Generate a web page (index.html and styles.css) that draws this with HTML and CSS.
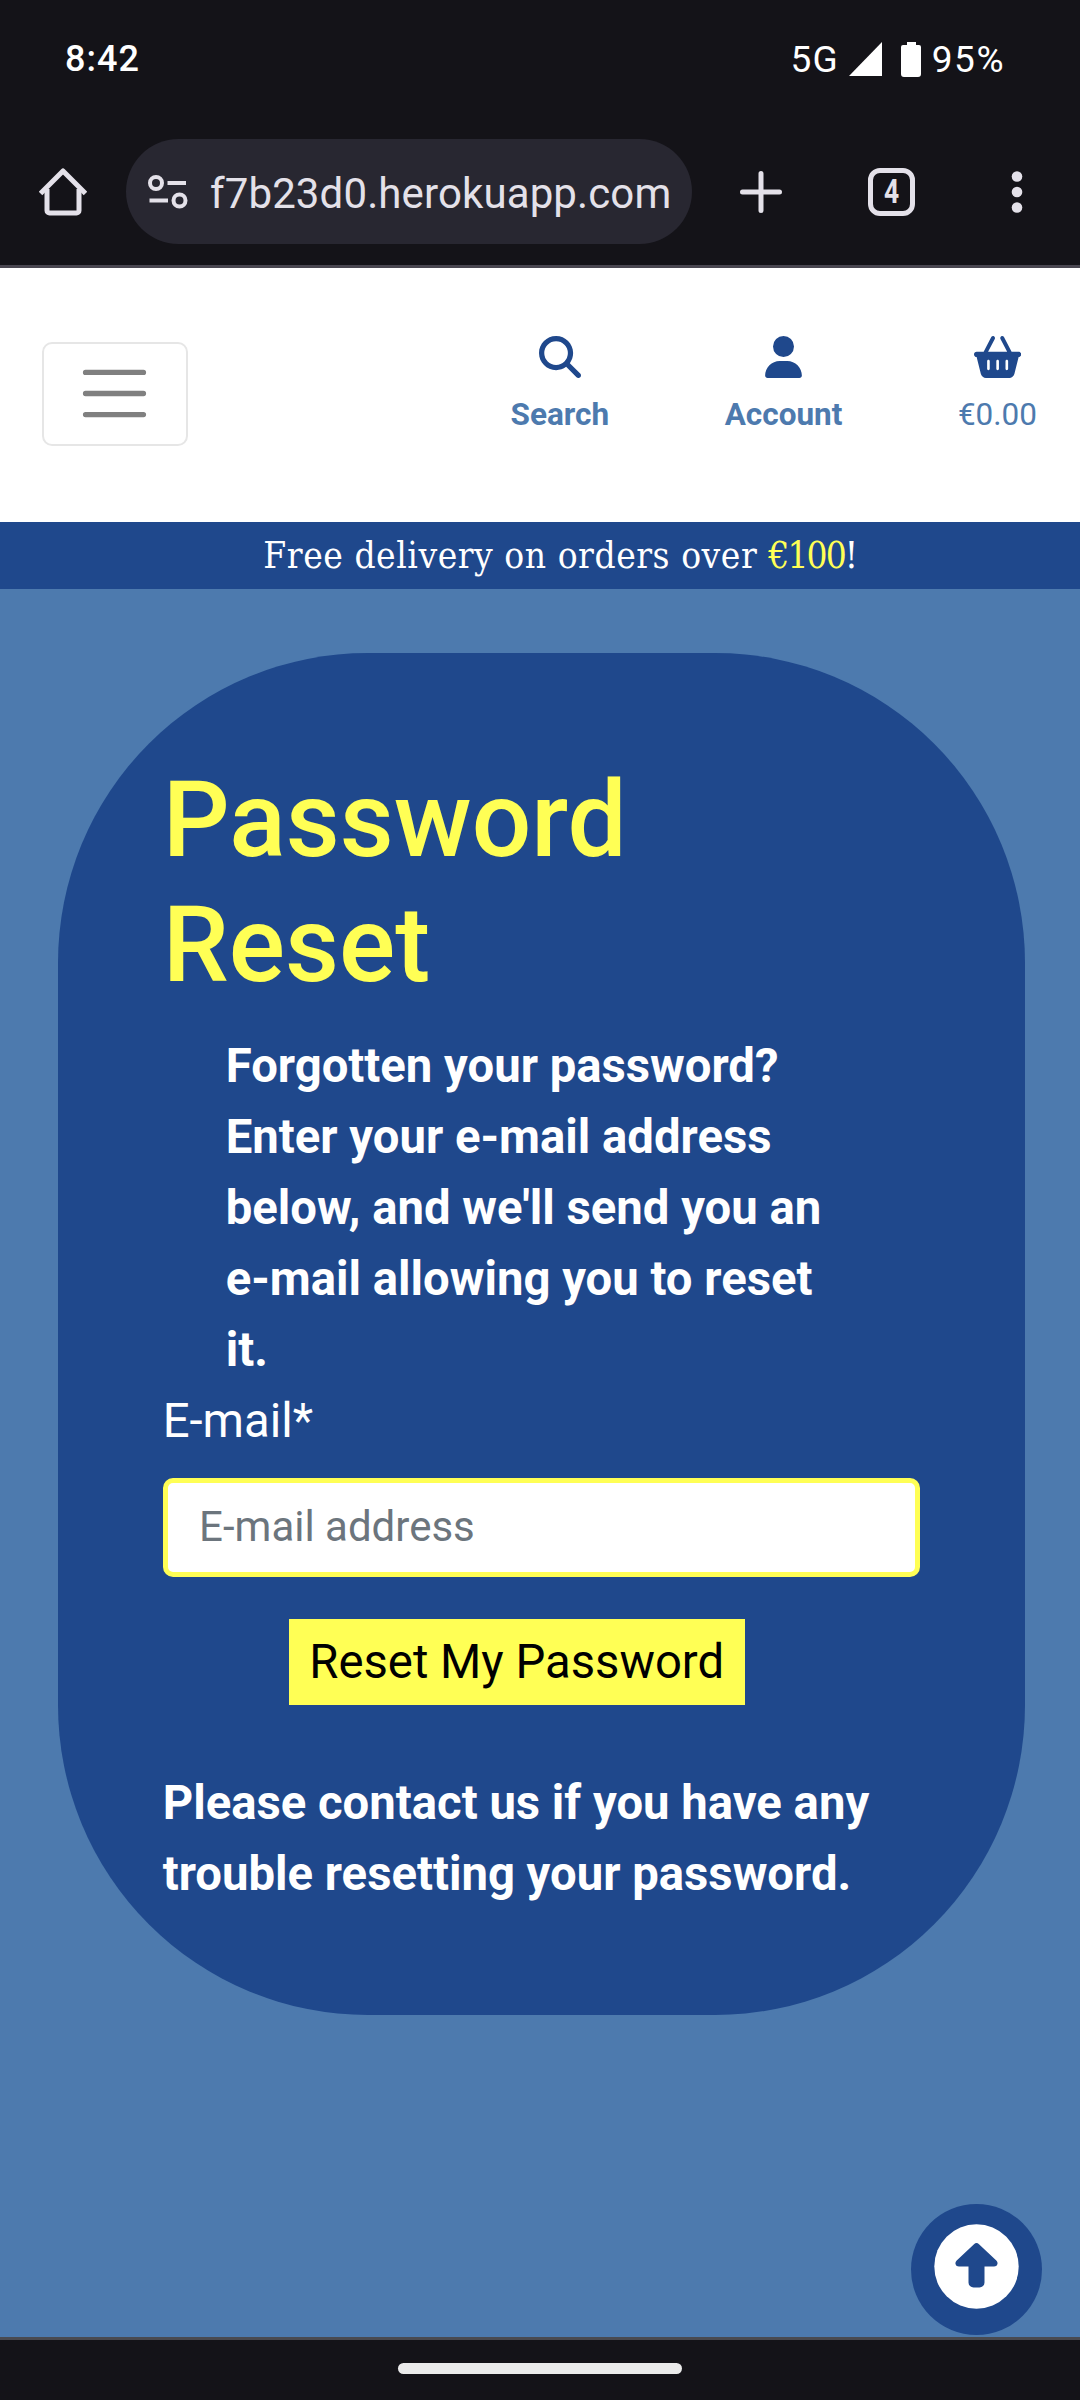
FILE: index.html
```html
<!DOCTYPE html>
<html lang="en">
<head>
<meta charset="utf-8">
<title>Password Reset</title>
<link rel="stylesheet" href="styles.css">
</head>
<body>
<div class="status">
  <span class="clock">8:42</span>
  <div class="status-right">
    <span class="network">5G</span>
    <svg class="signal" width="33" height="34" viewBox="0 0 33 34"><path d="M33 0v34H0z" fill="#fff"/></svg>
    <svg class="battery" width="20" height="35" viewBox="0 0 20 35"><path d="M6 0h9v3h3a2 2 0 0 1 2 2v27a3 3 0 0 1-3 3H3a3 3 0 0 1-3-3V5a2 2 0 0 1 2-2h4z" fill="#fff"/></svg>
    <span class="percent">95%</span>
  </div>
</div>
<div class="toolbar">
  <svg class="home" width="48" height="48" viewBox="0 0 48 48" fill="none" stroke="#e4e1e9" stroke-width="5"><path d="M1.5 25.500 24 3l22.500 22.500" stroke-linejoin="round"/><path d="M8 21v21.500a2.500 2.500 0 0 0 2.500 2.500h27a2.500 2.500 0 0 0 2.500-2.500V21"/></svg>
  <div class="address">
    <svg width="40" height="34" viewBox="0 0 40 34" fill="none" stroke="#e4e1e9" stroke-width="4"><circle cx="8" cy="8" r="6"/><circle cx="31.500" cy="25.500" r="6"/><path d="M19.500 8H38M1.500 25.500H20"/></svg>
    <span class="url">f7b23d0.herokuapp.com</span>
  </div>
  <svg class="plus" width="42" height="42" viewBox="0 0 42 42" stroke="#e4e1e9" stroke-width="5" stroke-linecap="round"><path d="M21 2.500v37M2.500 21h37"/></svg>
  <div class="tabs"><span class="tab-count">4</span></div>
  <svg class="dots" width="12" height="42" viewBox="0 0 12 42" fill="#e4e1e9"><circle cx="6" cy="5.500" r="5.300"/><circle cx="6" cy="21" r="5.300"/><circle cx="6" cy="36.500" r="5.300"/></svg>
</div>
<header class="header">
  <button class="toggler" aria-label="Menu"><svg width="79" height="79" viewBox="0 0 30 30"><path stroke="#808080" stroke-linecap="round" stroke-miterlimit="10" stroke-width="2" d="M4 7h22M4 15h22M4 23h22"/></svg></button>
  <nav class="links">
    <a class="link search"><svg width="42" height="42" viewBox="0 0 512 512"><path d="M416 208c0 45.900-14.900 88.300-40 122.700L502.600 457.400c12.500 12.500 12.500 32.800 0 45.300s-32.800 12.500-45.300 0L330.700 376c-34.400 25.200-76.800 40-122.700 40C93.100 416 0 322.900 0 208S93.100 0 208 0S416 93.100 416 208zM208 352a144 144 0 1 0 0-288 144 144 0 1 0 0 288z"/></svg><span>Search</span></a>
    <a class="link account"><svg width="37" height="42" viewBox="0 0 448 512"><path d="M224 256A128 128 0 1 0 224 0a128 128 0 1 0 0 256zm-45.700 48C79.800 304 0 383.800 0 482.300C0 498.700 13.300 512 29.700 512H418.300c16.400 0 29.700-13.300 29.700-29.700C448 383.800 368.200 304 269.700 304H178.300z"/></svg><span>Account</span></a>
    <a class="link basket"><svg width="47.250" height="42" viewBox="0 0 576 512"><path d="M253.300 35.100c6.100-11.800 1.500-26.300-10.200-32.400s-26.300-1.500-32.400 10.200L117.600 192H32c-17.700 0-32 14.300-32 32s14.300 32 32 32L83.900 463.500C91 492 116.600 512 146 512H430c29.400 0 55-20 62.100-48.500L544 256c17.700 0 32-14.300 32-32s-14.300-32-32-32H458.400L365.300 12.900C359.200 1.200 344.700-3.400 332.900 2.700s-16.300 20.600-10.200 32.400L404.300 192H171.700L253.300 35.100zM192 304v96c0 8.800-7.200 16-16 16s-16-7.200-16-16V304c0-8.800 7.200-16 16-16s16 7.200 16 16zm96-16c8.800 0 16 7.200 16 16v96c0 8.800-7.200 16-16 16s-16-7.200-16-16V304c0-8.800 7.200-16 16-16zm128 16v96c0 8.800-7.200 16-16 16s-16-7.200-16-16V304c0-8.800 7.200-16 16-16s16 7.200 16 16z"/></svg><span>€0.00</span></a>
  </nav>
</header>
<div class="banner"><span>Free delivery on orders over <span class="amount">€100</span>!</span></div>
<main class="main">
  <section class="card">
    <h1>Password Reset</h1>
    <p class="intro">Forgotten your password? Enter your e-mail address below, and we'll send you an e-mail allowing you to reset it.</p>
    <label class="label" for="email">E-mail*</label>
    <input class="input" id="email" type="email" placeholder="E-mail address">
    <button class="submit">Reset My Password</button>
    <p class="contact">Please contact us if you have any trouble resetting your password.</p>
  </section>
  <a class="to-top" aria-label="Back to top"><svg width="85" height="85" viewBox="0 0 85 85"><circle cx="42.500" cy="42.500" r="42.200" fill="#fff"/><path d="M40 20.200a3.600 3.600 0 0 1 5 0L62.300 36.500c2.400 2.300 1.200 6-2.300 6H50.500V58.500a5 5 0 0 1-5 5H39.500a5 5 0 0 1-5-5V42.500H25c-3.500 0-4.700-3.700-2.300-6z" fill="#1f488c"/></svg></a>
</main>
<footer class="gesture"><div class="handle"></div></footer>
</body>
</html>
```
FILE: styles.css
```css
* { box-sizing: border-box; }
body { margin: 0; width: 1080px; height: 2400px; overflow: hidden; display: flex; flex-direction: column; background: #141318; font-family: Roboto, "Liberation Sans", sans-serif; }
svg { display: block; flex: none; }
button { font-family: inherit; }

.status { height: 120px; display: flex; justify-content: space-between; padding: 0 75px 0 65px; color: #fff; font-size: 36px; font-weight: 500; line-height: 119px; }
.clock { letter-spacing: 1px; }
.status-right { display: flex; align-items: center; height: 118px; font-weight: 450; }
.network { font-size: 37px; letter-spacing: 1.2px; }
.signal { margin-left: 10px; }
.battery { margin-left: 19px; }
.percent { margin-left: 11px; font-size: 37px; letter-spacing: 1.5px; }

.toolbar { height: 148px; display: flex; align-items: center; padding: 0 56px 2px 39px; border-bottom: 3px solid #494650; }
.address { width: 566px; height: 105px; margin: 0 0 0 39px; padding-left: 22px; border-radius: 53px; background: #282731; display: flex; align-items: center; }
.url { margin-left: 22px; font-size: 42px; letter-spacing: 0.12px; color: #e4e1e9; position: relative; top: 2px; white-space: nowrap; }
.plus { margin-left: 48px; }
.tabs { width: 47px; height: 48px; margin-left: 86px; border: 5px solid #e4e1e9; border-radius: 12px; display: flex; align-items: center; justify-content: center; color: #e4e1e9; font-size: 33px; font-weight: 700; }
.tab-count { transform: scaleX(.8); }
.dots { margin-left: 96px; }

.header { height: 254px; background: #fff; display: flex; justify-content: space-between; align-items: flex-start; padding: 68px 43px 0 42px; }
.toggler { width: 146px; height: 104px; margin-top: 6px; border: 2px solid #e6e6e6; border-radius: 10px; background: none; padding: 0 1px 1px 0; display: flex; align-items: center; justify-content: center; }
.links { display: flex; }
.link { display: flex; flex-direction: column; align-items: center; fill: #1f488c; color: #4d7aae; font-size: 31.5px; font-weight: 700; line-height: 47px; }
.link span { margin-top: 13px; }
.account { margin-left: 115.5px; }
.basket { margin-left: 115.5px; font-weight: 400; }

.banner { height: 67px; background: #1f488c; color: #fff; display: flex; justify-content: center; align-items: center; padding-left: 42px; font-family: "Roboto Slab", "DejaVu Serif Condensed", "DejaVu Serif", serif; font-stretch: condensed; font-size: 36.75px; letter-spacing: 0.54px; white-space: nowrap; }
.amount { color: #ffff55; letter-spacing: -1.9px; }

.main { height: 1751px; flex: none; position: relative; background: #4d7aae; border-bottom: 3px solid #494a50; padding: 64px 55px 0 58px; }
.card { height: 1362px; border-radius: 310px; background: #1f488c; padding: 104.9px 105px 0 104.7px; color: #fff; font-size: 47.25px; line-height: 70.875px; display: flex; flex-direction: column; align-items: flex-start; }
h1 { margin: 0; width: 600px; font-size: 105px; line-height: 125.6px; font-weight: 500; color: #ffff55; }
.intro { margin: 22px 63px 0; font-weight: 700; }
.label { font-weight: 400; margin-top: 0.5px; }
.input { width: 757px; height: 99px; margin-top: 21px; border: 5px solid #ffff55; border-radius: 10px; background: #fff; padding: 0 31.4px 2px; font-family: inherit; font-size: 42px; }
.input::placeholder { color: #6c757d; opacity: 1; }
.submit { width: 456px; height: 86px; margin: 42px 0 0 126px; border: 0; padding: 0; background: #ffff55; color: #000; font-size: 47.25px; white-space: nowrap; }
.contact { margin: 63.2px 0 0; font-weight: 700; }
.to-top { position: absolute; left: 911px; top: 1615px; width: 131px; height: 131px; border-radius: 50%; background: #1f488c; display: flex; justify-content: center; padding-top: 20px; }

.gesture { height: 60px; display: flex; justify-content: center; padding-top: 23px; }
.handle { width: 284px; height: 11px; border-radius: 6px; background: #ebebeb; }
```
